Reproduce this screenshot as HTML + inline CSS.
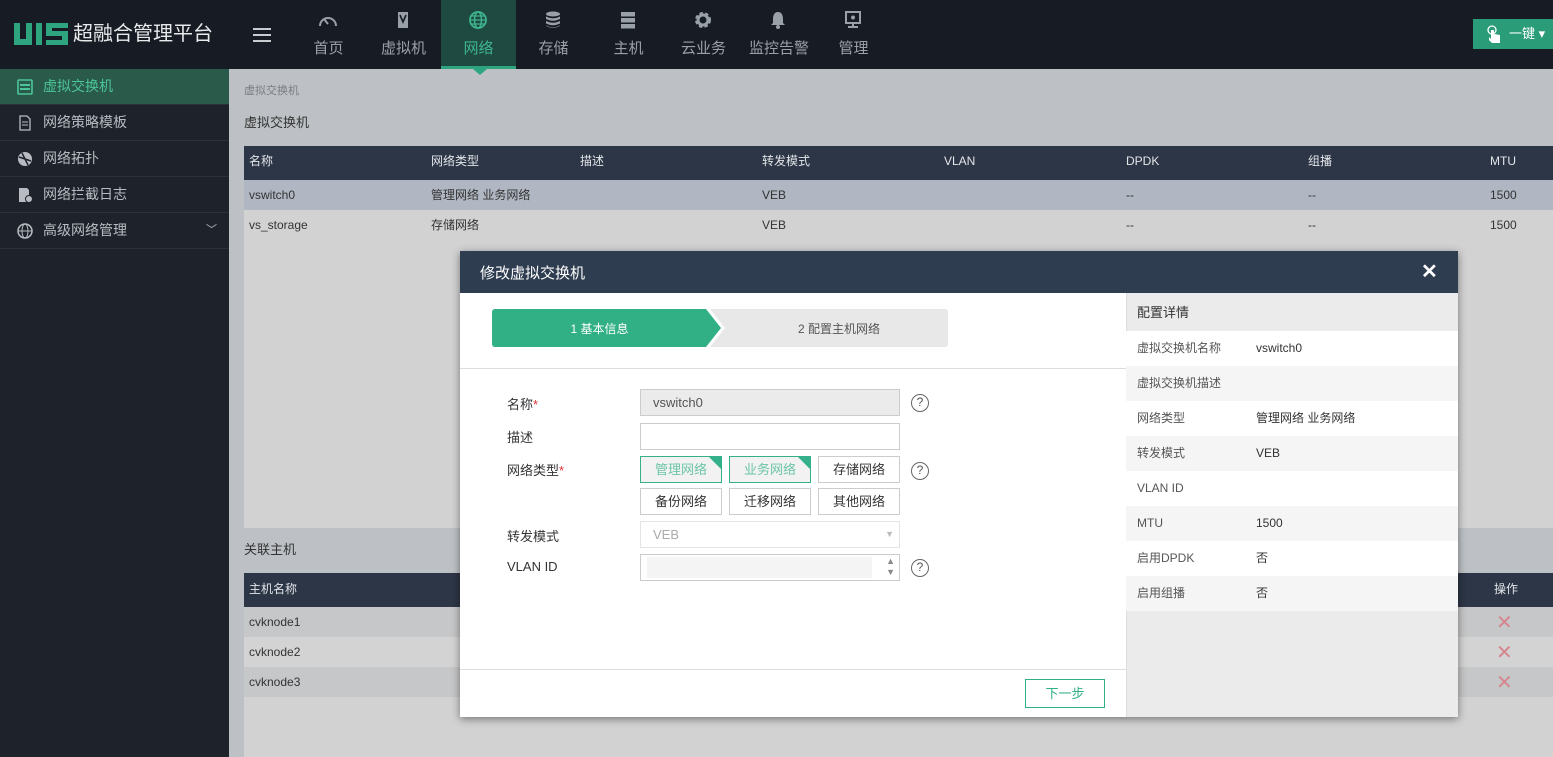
<!DOCTYPE html>
<html><head><meta charset="utf-8"><style>
*{margin:0;padding:0;box-sizing:border-box}
body{width:1553px;height:757px;overflow:hidden;position:relative;font-family:"Liberation Sans","Noto Sans CJK SC",sans-serif;font-size:12px;color:#333;background:#bdc1c5}
.abs{position:absolute}
.top{left:0;top:0;width:1553px;height:69px;background:#171b24}
.nav{position:absolute;top:0;width:75px;height:69px;text-align:center;color:#9aa0a8;font-size:15px}
.nav svg{position:absolute;left:27px;top:11px}
.nav span{position:absolute;left:0;right:0;top:37px}
.side{left:0;top:69px;width:229px;height:688px;background:#1e232b}
.si{position:absolute;left:0;width:229px;height:36px;border-bottom:1px solid #2b313a;color:#b8bcc2;font-size:14px;line-height:35px;padding-left:43px}
.si svg{position:absolute;left:17px;top:10px}
.th{background:#2d3646;color:#e3e6ea;font-size:12px}
.cell{position:absolute;line-height:30px}
.modal{left:460px;top:251px;width:998px;height:466px;background:#fff;box-shadow:0 2px 8px rgba(0,0,0,.45)}
.lbl{position:absolute;left:507px;font-size:13px;color:#333}
.inp{position:absolute;left:640px;width:260px;height:27px;border:1px solid #ccc;background:#fff}
.tb{position:absolute;width:82px;height:27px;border:1px solid #ccc;text-align:center;line-height:25px;font-size:13px;color:#333;background:#fff}
.tb.on{border-color:#34b08a;color:#6cc5a8;background:#f2f2f2;overflow:hidden}
.tb.on:after{content:"";position:absolute;right:-1px;top:-1px;border-top:14px solid #34b08a;border-left:14px solid transparent}
.q{position:absolute;left:911px;width:18px;height:18px;border:1.5px solid #666;border-radius:50%;text-align:center;line-height:15px;font-size:12px;color:#555}
.pr{position:absolute;left:1126px;width:332px;height:35px;line-height:35px;font-size:12px;color:#555}
.pr b{font-weight:normal;position:absolute;left:11px}
.pr em{font-style:normal;position:absolute;left:130px;color:#333}
.x{position:absolute;left:1496px;color:#d5868f;font-size:20px;line-height:20px}
</style></head><body>
<div class="abs top"></div>
<svg class="abs" style="left:14px;top:23px" width="56" height="22" viewBox="0 0 56 22"><path d="M0 0H6V16H12V0H18V22H0Z" fill="#2fa57f"/><rect x="22" y="0" width="6" height="22" fill="#2fa57f"/><path d="M32 0H54V5H38V8H54V22H32V17H48V13H32Z" fill="#2fa57f"/></svg>
<div class="abs" style="left:73px;top:21px;font-size:20px;color:#e8eaec;line-height:26px">超融合管理平台</div>
<div class="abs" style="left:253px;top:28px;width:18px;height:2px;background:#c8ccd0;box-shadow:0 6px 0 #c8ccd0,0 12px 0 #c8ccd0"></div>
<div class="nav" style="left:291px"><svg width="20" height="18" viewBox="0 0 20 18"><path d="M2 15A8 8 0 1 1 18 15" fill="none" stroke="#9aa0a8" stroke-width="2"/><path d="M10 13L6 8" stroke="#9aa0a8" stroke-width="2"/></svg><span>首页</span></div>
<div class="nav" style="left:366px"><svg width="20" height="18" viewBox="0 0 20 18"><rect x="5" y="1" width="10" height="16" fill="#9aa0a8"/><path d="M7 4L10 11L13 4" stroke="#171b24" stroke-width="1.6" fill="none"/></svg><span>虚拟机</span></div>
<div class="nav" style="left:441px;background:#1f4a42;color:#3fb58e"><svg width="20" height="18" viewBox="0 0 20 18"><circle cx="10" cy="9" r="8" fill="none" stroke="#3fb58e" stroke-width="1.8"/><ellipse cx="10" cy="9" rx="3.5" ry="8" fill="none" stroke="#3fb58e" stroke-width="1.5"/><path d="M2 9H18M3 5H17M3 13H17" stroke="#3fb58e" stroke-width="1.3"/></svg><span>网络</span><div style="position:absolute;left:0;bottom:0;width:75px;height:3px;background:#2fa57f"></div></div>
<div class="abs" style="left:473px;top:69px;border-top:6px solid #2fa57f;border-left:7px solid transparent;border-right:7px solid transparent"></div>
<div class="nav" style="left:516px"><svg width="20" height="18" viewBox="0 0 20 18"><ellipse cx="10" cy="3" rx="7" ry="2.5" fill="#9aa0a8"/><path d="M3 5.5Q10 9 17 5.5V8Q10 11.5 3 8ZM3 10Q10 13.5 17 10V12.5Q10 16 3 12.5ZM3 14.5Q10 18 17 14.5V15Q10 18.5 3 15Z" fill="#9aa0a8"/></svg><span>存储</span></div>
<div class="nav" style="left:591px"><svg width="20" height="18" viewBox="0 0 20 18"><rect x="3" y="1" width="14" height="4.5" fill="#9aa0a8"/><rect x="3" y="7" width="14" height="4.5" fill="#9aa0a8"/><rect x="3" y="13" width="14" height="4.5" fill="#9aa0a8"/></svg><span>主机</span></div>
<div class="nav" style="left:666px"><svg width="20" height="18" viewBox="0 0 20 18"><circle cx="10" cy="9" r="6" fill="none" stroke="#9aa0a8" stroke-width="4" stroke-dasharray="3 2"/><circle cx="10" cy="9" r="5" fill="none" stroke="#9aa0a8" stroke-width="3"/></svg><span>云业务</span></div>
<div class="nav" style="left:741px;width:76px"><svg width="20" height="18" viewBox="0 0 20 18"><path d="M10 1C6 1 5 5 5 8V12L3 14H17L15 12V8C15 5 14 1 10 1Z" fill="#9aa0a8"/><circle cx="10" cy="16" r="2" fill="#9aa0a8"/></svg><span>监控告警</span></div>
<div class="nav" style="left:816px"><svg width="20" height="18" viewBox="0 0 20 18"><rect x="3" y="1" width="14" height="11" fill="none" stroke="#9aa0a8" stroke-width="2"/><circle cx="10" cy="6.5" r="2" fill="#9aa0a8"/><path d="M10 12V15M5 16H15" stroke="#9aa0a8" stroke-width="2"/></svg><span>管理</span></div>
<div class="abs" style="left:1473px;top:19px;width:80px;height:30px;background:#2a9d78;color:#fff;font-size:13px;line-height:30px;padding-left:36px">一键 ▾<svg style="position:absolute;left:14px;top:6px" width="14" height="18" viewBox="0 0 14 18"><circle cx="5" cy="5" r="4" fill="none" stroke="#fff" stroke-width="1.3"/><path d="M4 5V14L2 12V15L5 18H13V10L7 9V5Z" fill="#fff"/></svg></div>

<div class="abs side"></div>
<div class="si" style="top:69px;background:#2a5a4a;color:#4cc59a"><svg width="16" height="16" viewBox="0 0 16 16"><rect x="1" y="1" width="14" height="14" rx="1" fill="none" stroke="#4cc59a" stroke-width="1.6"/><path d="M3 6H13M3 10H13" stroke="#4cc59a" stroke-width="2"/></svg>虚拟交换机</div>
<div class="si" style="top:105px"><svg width="16" height="16" viewBox="0 0 16 16"><path d="M3 1H10L13 4V15H3Z" fill="none" stroke="#b8bcc2" stroke-width="1.3"/><path d="M5 7H11M5 10H11" stroke="#b8bcc2"/></svg>网络策略模板</div>
<div class="si" style="top:141px"><svg width="16" height="16" viewBox="0 0 16 16"><circle cx="8" cy="8" r="7" fill="#b8bcc2"/><path d="M2 6L14 10M5 2L11 14" stroke="#1e232b" stroke-width="1.5"/></svg>网络拓扑</div>
<div class="si" style="top:177px"><svg width="16" height="16" viewBox="0 0 16 16"><path d="M2 1H10L12 3V15H2Z" fill="#b8bcc2"/><circle cx="12" cy="12" r="3.5" fill="#b8bcc2" stroke="#1e232b"/></svg>网络拦截日志</div>
<div class="si" style="top:213px"><svg width="16" height="16" viewBox="0 0 16 16"><circle cx="8" cy="8" r="7" fill="none" stroke="#b8bcc2" stroke-width="1.5"/><ellipse cx="8" cy="8" rx="3" ry="7" fill="none" stroke="#b8bcc2"/><path d="M1 8H15" stroke="#b8bcc2"/></svg>高级网络管理<span style="position:absolute;left:206px;top:0;font-size:11px">﹀</span></div>

<div class="abs" style="left:244px;top:82px;color:#7a7e84;font-size:11px">虚拟交换机</div>
<div class="abs" style="left:244px;top:112px;color:#333;font-size:13px">虚拟交换机</div>
<div class="abs th" style="left:244px;top:146px;width:1309px;height:34px"></div>
<div class="abs" style="left:244px;top:180px;width:1309px;height:30px;background:#b0b7c2"></div>
<div class="abs" style="left:244px;top:210px;width:1309px;height:318px;background:#d2d2d2"></div>
<div class="cell" style="left:249px;top:146px;line-height:30px;color:#e3e6ea">名称</div>
<div class="cell" style="left:431px;top:146px;color:#e3e6ea">网络类型</div>
<div class="cell" style="left:580px;top:146px;color:#e3e6ea">描述</div>
<div class="cell" style="left:762px;top:146px;color:#e3e6ea">转发模式</div>
<div class="cell" style="left:944px;top:146px;color:#e3e6ea">VLAN</div>
<div class="cell" style="left:1126px;top:146px;color:#e3e6ea">DPDK</div>
<div class="cell" style="left:1308px;top:146px;color:#e3e6ea">组播</div>
<div class="cell" style="left:1490px;top:146px;color:#e3e6ea">MTU</div>
<div class="cell" style="left:249px;top:180px">vswitch0</div><div class="cell" style="left:431px;top:180px">管理网络 业务网络</div><div class="cell" style="left:762px;top:180px">VEB</div><div class="cell" style="left:1126px;top:180px">--</div><div class="cell" style="left:1308px;top:180px">--</div><div class="cell" style="left:1490px;top:180px">1500</div>
<div class="cell" style="left:249px;top:210px">vs_storage</div><div class="cell" style="left:431px;top:210px">存储网络</div><div class="cell" style="left:762px;top:210px">VEB</div><div class="cell" style="left:1126px;top:210px">--</div><div class="cell" style="left:1308px;top:210px">--</div><div class="cell" style="left:1490px;top:210px">1500</div>

<div class="abs" style="left:244px;top:539px;font-size:13px">关联主机</div>
<div class="abs th" style="left:244px;top:573px;width:1309px;height:34px"></div>
<div class="abs" style="left:244px;top:607px;width:1309px;height:30px;background:#c6c7c8"></div>
<div class="abs" style="left:244px;top:637px;width:1309px;height:30px;background:#d3d3d3"></div>
<div class="abs" style="left:244px;top:667px;width:1309px;height:30px;background:#c6c7c8"></div>
<div class="abs" style="left:244px;top:697px;width:1309px;height:60px;background:#d2d2d2"></div>
<div class="cell" style="left:249px;top:573px;line-height:32px;color:#e3e6ea">主机名称</div>
<div class="cell" style="left:1494px;top:573px;line-height:32px;color:#e3e6ea">操作</div>
<div class="cell" style="left:249px;top:607px">cvknode1</div><div class="cell" style="left:249px;top:637px">cvknode2</div><div class="cell" style="left:249px;top:667px">cvknode3</div>
<div class="x" style="top:613px">✕</div><div class="x" style="top:643px">✕</div><div class="x" style="top:673px">✕</div>

<div class="abs modal"></div>
<div class="abs" style="left:460px;top:251px;width:998px;height:42px;background:#2f3d50"></div>
<div class="abs" style="left:480px;top:262px;color:#fff;font-size:15px">修改虚拟交换机</div>
<div class="abs" style="left:1421px;top:259px;color:#fff;font-size:20px;font-weight:bold">✕</div>
<div class="abs" style="left:1126px;top:293px;width:332px;height:424px;background:#ebebeb;border-left:1px solid #ddd"></div>
<div class="pr" style="top:294px;height:37px;line-height:37px;color:#333;font-size:13px"><b>配置详情</b></div>
<div class="pr" style="top:331px;background:#fff"><b>虚拟交换机名称</b><em>vswitch0</em></div>
<div class="pr" style="top:366px;background:#f5f5f5"><b>虚拟交换机描述</b></div>
<div class="pr" style="top:401px;background:#fff"><b>网络类型</b><em>管理网络 业务网络</em></div>
<div class="pr" style="top:436px;background:#f5f5f5"><b>转发模式</b><em>VEB</em></div>
<div class="pr" style="top:471px;background:#fff"><b>VLAN ID</b></div>
<div class="pr" style="top:506px;background:#f5f5f5"><b>MTU</b><em>1500</em></div>
<div class="pr" style="top:541px;background:#fff"><b>启用DPDK</b><em>否</em></div>
<div class="pr" style="top:576px;background:#f5f5f5"><b>启用组播</b><em>否</em></div>

<div class="abs" style="left:492px;top:309px;width:456px;height:38px;background:#e8e8e8;border-radius:3px"></div>
<div class="abs" style="left:492px;top:309px;width:218px;height:38px;background:#31b086;border-radius:3px 0 0 3px"></div>
<svg class="abs" style="left:706px;top:309px" width="22" height="38"><path d="M0 0H4L19 19L4 38H0Z" fill="#fff"/><path d="M0 0L15 19L0 38Z" fill="#31b086"/></svg>
<div class="abs" style="left:492px;top:320px;width:215px;text-align:center;color:#fff;font-size:12px">1 基本信息</div>
<div class="abs" style="left:730px;top:320px;width:218px;text-align:center;color:#555;font-size:12px">2 配置主机网络</div>
<div class="abs" style="left:460px;top:368px;width:666px;height:1px;background:#ddd"></div>

<div class="lbl" style="top:394px">名称<span style="color:#d33">*</span></div>
<div class="inp" style="top:389px;background:#ebebeb;color:#555;font-size:13px;line-height:25px;padding-left:12px">vswitch0</div>
<div class="q" style="top:394px">?</div>
<div class="lbl" style="top:427px">描述</div>
<div class="inp" style="top:423px"></div>
<div class="lbl" style="top:460px">网络类型<span style="color:#d33">*</span></div>
<div class="tb on" style="left:640px;top:456px">管理网络</div>
<div class="tb on" style="left:729px;top:456px">业务网络</div>
<div class="tb" style="left:818px;top:456px">存储网络</div>
<div class="q" style="top:462px">?</div>
<div class="tb" style="left:640px;top:488px">备份网络</div>
<div class="tb" style="left:729px;top:488px">迁移网络</div>
<div class="tb" style="left:818px;top:488px">其他网络</div>
<div class="lbl" style="top:526px">转发模式</div>
<div class="inp" style="top:521px;border-color:#e4e4e4;color:#aaa;font-size:13px;line-height:25px;padding-left:12px">VEB<span style="position:absolute;right:5px;top:0;font-size:9px;color:#bbb">▼</span></div>
<div class="lbl" style="top:559px">VLAN ID</div>
<div class="inp" style="top:554px"><div style="position:absolute;left:6px;top:2px;width:225px;height:21px;background:#f4f4f4"></div><span style="position:absolute;right:4px;top:1px;font-size:9px;color:#888;line-height:11px">▲<br>▼</span></div>
<div class="q" style="top:559px">?</div>

<div class="abs" style="left:460px;top:669px;width:666px;height:1px;background:#ddd"></div>
<div class="abs" style="left:1025px;top:679px;width:80px;height:29px;border:1px solid #31b086;color:#31b086;text-align:center;line-height:27px;font-size:13px;background:#fff">下一步</div>
</body></html>
